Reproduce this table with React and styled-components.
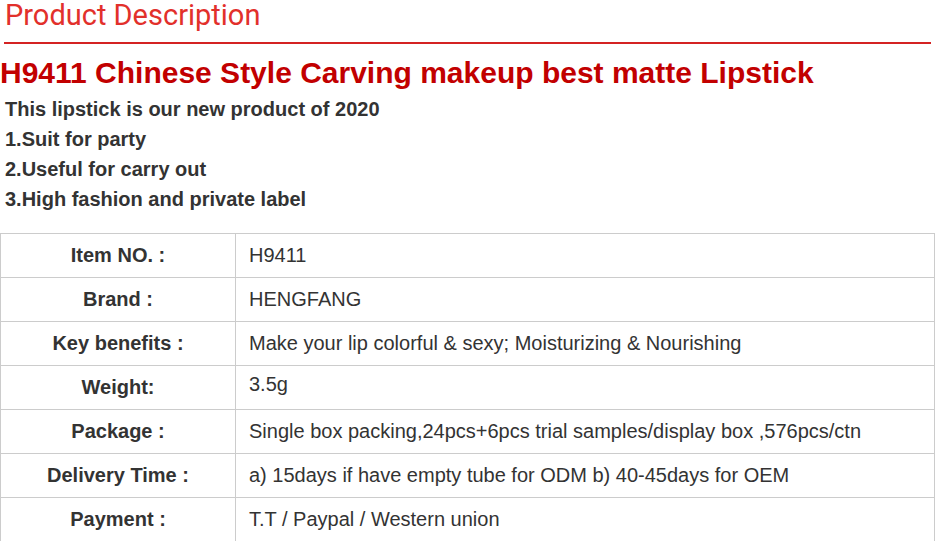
import React from 'react'
import styled, { createGlobalStyle } from 'styled-components'

const GlobalStyle = createGlobalStyle`
  html, body {
    margin: 0;
    padding: 0;
    background: #fff;
  }
  body {
    font-family: "Liberation Sans", Arial, sans-serif;
    color: #333;
  }
`

const specs = [
  { label: 'Item NO. :', value: 'H9411' },
  { label: 'Brand :', value: 'HENGFANG' },
  { label: 'Key benefits :', value: 'Make your lip colorful & sexy; Moisturizing & Nourishing' },
  { label: 'Weight:', value: '3.5g', lift: true },
  { label: 'Package :', value: 'Single box packing,24pcs+6pcs trial samples/display box ,576pcs/ctn' },
  { label: 'Delivery Time :', value: 'a) 15days if have empty tube for ODM b) 40-45days for OEM' },
  { label: 'Payment :', value: 'T.T / Paypal / Western union' },
]

const points = [
  'This lipstick is our new product of 2020',
  '1.Suit for party',
  '2.Useful for carry out',
  '3.High fashion and private label',
]

const App = () => {
  return (
    <>
      <GlobalStyle />
      <Page>
        <SectionHead>
          <h2>Product Description</h2>
        </SectionHead>
        <Title>H9411 Chinese Style Carving makeup best matte Lipstick</Title>
        <Points>
          {points.map((p) => (
            <li key={p}>{p}</li>
          ))}
        </Points>
        <SpecTable>
          <tbody>
            {specs.map((row) => (
              <tr key={row.label}>
                <Label>{row.label}</Label>
                <Value $lift={row.lift}>{row.value}</Value>
              </tr>
            ))}
          </tbody>
        </SpecTable>
      </Page>
    </>
  )
}

const Page = styled.div`
  width: 936px;
  height: 541px;
  overflow: hidden;
`

const SectionHead = styled.div`
  margin: 0 5px 0 4px;
  border-bottom: 2px solid #d42323;
  padding-bottom: 12px;

  h2 {
    margin: 0;
    padding-left: 1px;
    font-family: Roboto, "Liberation Sans", sans-serif;
    font-weight: 400;
    font-size: 29px;
    line-height: 30px;
    color: #e2302b;
  }
`

const Title = styled.h1`
  margin: 12px 0 0 0;
  font-size: 30px;
  line-height: 34px;
  font-weight: 700;
  color: #c20000;
  white-space: nowrap;
`

const Points = styled.ul`
  list-style: none;
  margin: 4px 0 0 0;
  padding: 0 0 0 5px;

  li {
    font-size: 20px;
    font-weight: 700;
    line-height: 30px;
    color: #333;
  }
`

const SpecTable = styled.table`
  margin-top: 19px;
  width: 935px;
  border-collapse: collapse;
  table-layout: fixed;

  td {
    border: 1px solid #ccc;
    height: 43px;
    padding: 0;
    font-size: 20px;
    color: #333;
    vertical-align: middle;
  }
`

const Label = styled.td`
  width: 234px;
  text-align: center;
  font-weight: 700;
`

const Value = styled.td`
  padding-left: 13px !important;
  white-space: nowrap;
  ${(p) => p.$lift && 'padding-bottom: 6px !important; height: 37px !important;'}
`

export default App
